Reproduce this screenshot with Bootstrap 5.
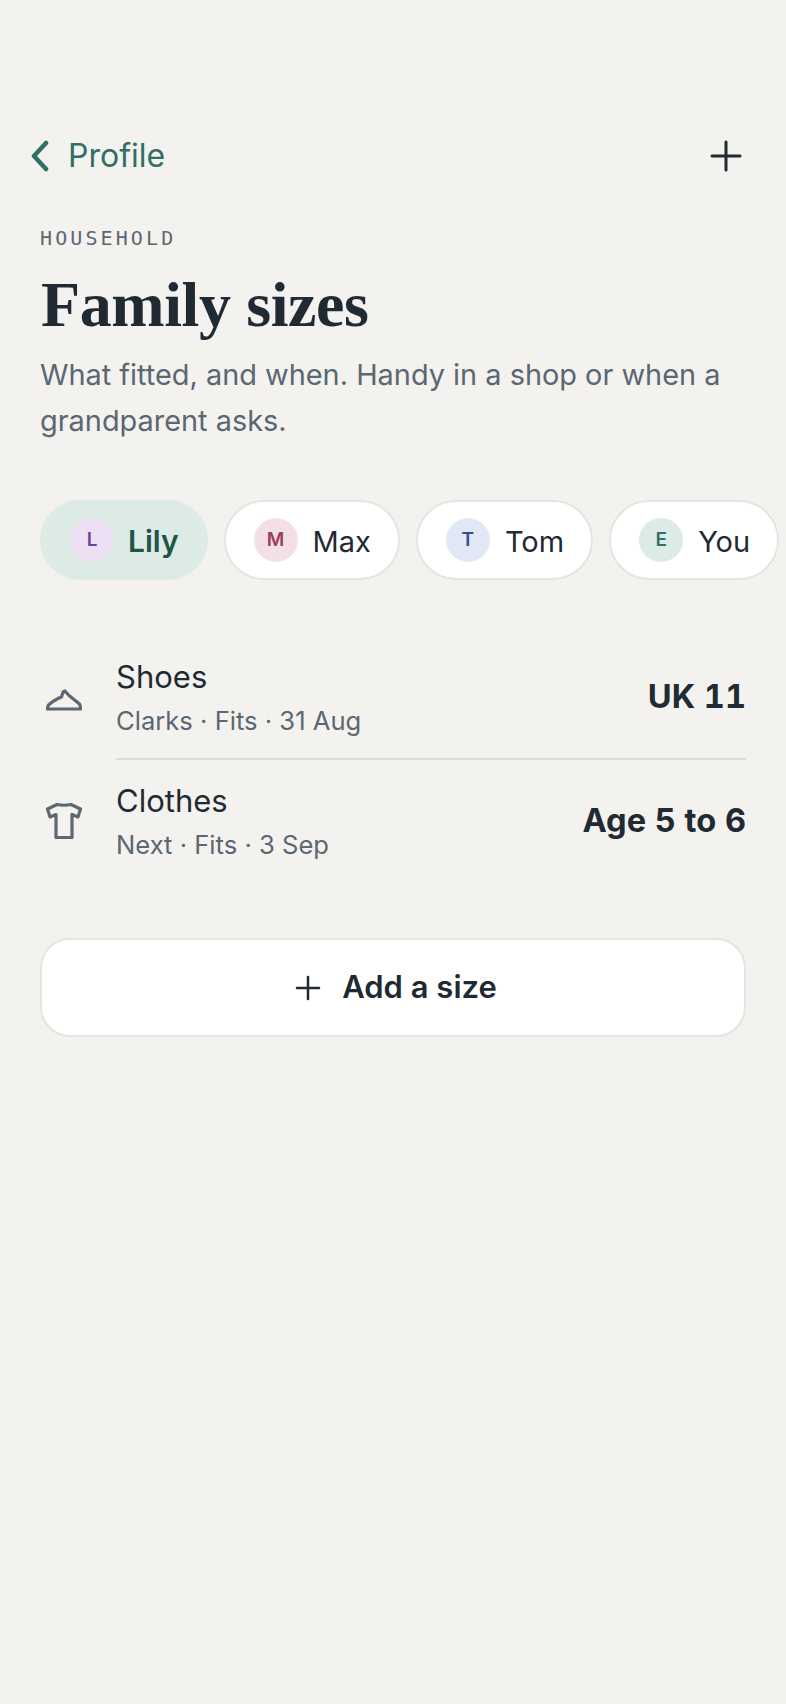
<!DOCTYPE html>
<html lang="en">
<head>
  <meta charset="UTF-8">
  <meta name="viewport" content="width=device-width, initial-scale=1.0">
  <title>Family sizes</title>
  <link href="https://cdn.jsdelivr.net/npm/bootstrap@5.3.2/dist/css/bootstrap.min.css" rel="stylesheet">
  <style>
    html, body { height: 100%; }
    body { background: #f4f2ef; color: #1f2a33; font-family: Inter, "Liberation Sans", sans-serif; overflow: hidden; }
    .screen { padding: 136px 40px 0 40px; }

    .top-bar { height: 40px; margin-left: -10px; margin-right: 4px; }
    .back-link { color: #2f6f66; font-size: 32px; line-height: 40px; text-decoration: none; gap: 18px; }

    .eyebrow { margin-top: 50px; font-family: "DejaVu Sans Mono", monospace; font-size: 20px; line-height: 24px; letter-spacing: 3.100px; color: #5b6771; }
    .page-title { margin: 19px 0 0 1px; font-family: "Liberation Serif", serif; font-weight: 700; font-size: 64px; line-height: 72px; letter-spacing: -.4px; color: #1f2a33; }
    .page-sub { margin: 11px 0 0; font-size: 28.900px; line-height: 46px; color: #5b6771; }

    .chip-row { margin-top: 56px; gap: 16px; margin-right: -40px; }
    .who-chip { height: 80px; padding: 0 27px 0 28px; border: 2px solid #e4e4e1; border-radius: 40px; background: #fff; font-size: 29px; gap: 15px; flex: none; }
    .who-chip.on { padding-right: 27px; gap: 14px; background: #dcebe5; border-color: #dcebe5; color: #235249; font-size: 30px; font-weight: 600; }
    .who-name { padding-top: 3px; }
    .who-dot { width: 44px; height: 44px; border-radius: 50%; font-size: 19px; font-weight: 600; }
    .dot-l { background: #eee0f4; color: #6b4698; }
    .dot-m { background: #f5dfe7; color: #9c3d5e; }
    .dot-t { background: #e1e7f5; color: #31508f; }
    .dot-e { background: #dcebe5; color: #2f6f66; }

    .size-list { margin-top: 57px; }
    .size-row { height: 123px; }
    .size-icon { width: 44px; margin-left: 2px; margin-right: 30px; flex: none; }
    .size-body { flex: 1; border-bottom: 2px solid #dcdcd7; height: 100%; }
    .size-row:last-child .size-body { border-bottom: 0; }
    .size-name { font-size: 31px; line-height: 40px; }
    .size-meta { font-size: 25.600px; line-height: 36px; color: #5b6771; margin-top: 6px; }
    .size-val { margin-bottom: 2px; font-size: 32.600px; font-weight: 700; font-variant-numeric: tabular-nums; }

    .add-btn { margin-top: 55px; width: 100%; height: 99px; padding-left: 18px; background: #fff; border: 2px solid #e4e4e1; border-radius: 30px; font-size: 31px; font-weight: 600; color: #1f2a33; gap: 21px; }
    .add-btn:hover, .add-btn:active { background: #fff; border-color: #e4e4e1; color: #1f2a33; }
  </style>
</head>
<body>
  <div class="screen">
    <div class="top-bar d-flex justify-content-between align-items-center">
      <a href="#" class="back-link d-flex align-items-center">
        <svg width="20" height="32" viewBox="0 0 20 32" fill="none" stroke="#2f6f66" stroke-width="4.500" stroke-linecap="round" stroke-linejoin="round"><path d="M16 3 L4 16 L16 29"/></svg>
        Profile
      </a>
      <svg width="32" height="32" viewBox="0 0 32 32" fill="none" stroke="#1f2a33" stroke-width="3" stroke-linecap="round"><path d="M16 2 V30 M2 16 H30"/></svg>
    </div>

    <div class="eyebrow">HOUSEHOLD</div>
    <h1 class="page-title">Family sizes</h1>
    <p class="page-sub">What fitted, and when. Handy in a shop or when a grandparent asks.</p>

    <div class="chip-row d-flex">
      <div class="who-chip on d-flex align-items-center"><span class="who-dot dot-l d-flex align-items-center justify-content-center">L</span><span class="who-name">Lily</span></div>
      <div class="who-chip d-flex align-items-center"><span class="who-dot dot-m d-flex align-items-center justify-content-center">M</span><span class="who-name">Max</span></div>
      <div class="who-chip d-flex align-items-center"><span class="who-dot dot-t d-flex align-items-center justify-content-center">T</span><span class="who-name">Tom</span></div>
      <div class="who-chip d-flex align-items-center"><span class="who-dot dot-e d-flex align-items-center justify-content-center">E</span><span class="who-name">You</span></div>
    </div>

    <div class="size-list">
      <div class="size-row d-flex align-items-center">
        <div class="size-icon d-flex justify-content-center">
          <svg width="38" height="32" viewBox="0 -5.500 38 32" fill="none" stroke="#5b6771" stroke-width="3.200" stroke-linecap="round" stroke-linejoin="round"><path d="M20 2.500 L24 7 L34.500 15.500 Q35.500 17 35.500 20.500 H2.500 Q2.500 18 3.500 16.500 Q8 12.500 13 10 L16.500 8.500 L18 3.500 Z"/></svg>
        </div>
        <div class="size-body d-flex justify-content-between align-items-center">
          <div>
            <div class="size-name">Shoes</div>
            <div class="size-meta">Clarks · Fits · 31 Aug</div>
          </div>
          <div class="size-val">UK 11</div>
        </div>
      </div>
      <div class="size-row d-flex align-items-center">
        <div class="size-icon d-flex justify-content-center">
          <svg width="36" height="40" viewBox="0 0 36 40" fill="none" stroke="#5b6771" stroke-width="3.200" stroke-linecap="round" stroke-linejoin="round"><path d="M11 2.500 Q18 4 25 2.500 L34.500 7 L32 15 L26 12.500 V35.500 H10 V12.500 L4 15 L1.500 7 Z"/></svg>
        </div>
        <div class="size-body d-flex justify-content-between align-items-center">
          <div>
            <div class="size-name">Clothes</div>
            <div class="size-meta">Next · Fits · 3 Sep</div>
          </div>
          <div class="size-val">Age 5 to 6</div>
        </div>
      </div>
    </div>

    <button type="button" class="btn add-btn d-flex align-items-center justify-content-center">
      <svg width="26" height="26" viewBox="0 0 26 26" fill="none" stroke="#1f2a33" stroke-width="2.500" stroke-linecap="round"><path d="M13 2 V24 M2 13 H24"/></svg>
      Add a size
    </button>
  </div>
  <script src="https://cdn.jsdelivr.net/npm/bootstrap@5.3.2/dist/js/bootstrap.bundle.min.js"></script>
</body>
</html>
